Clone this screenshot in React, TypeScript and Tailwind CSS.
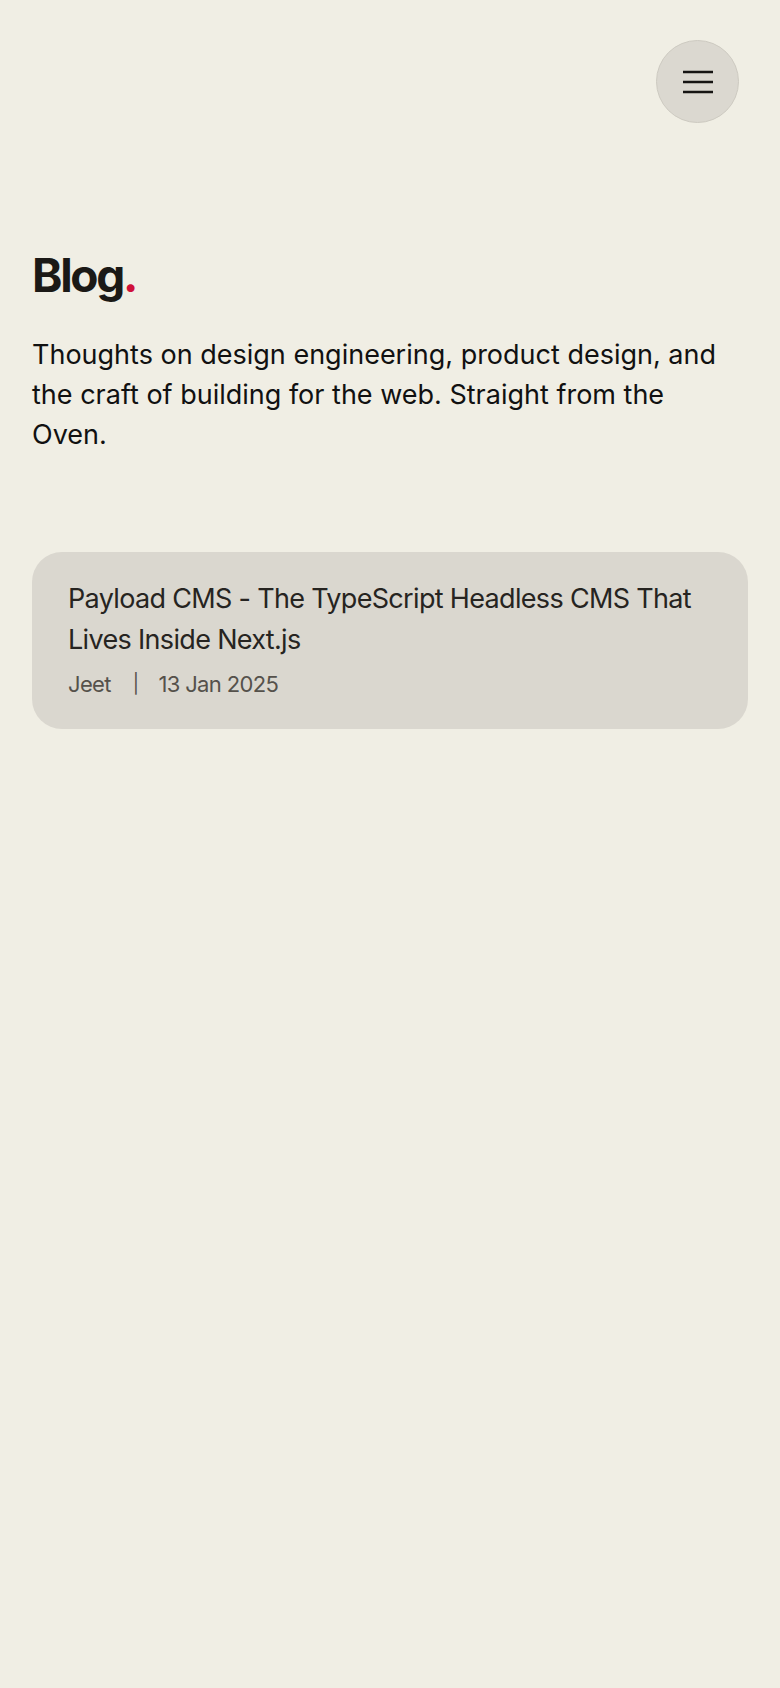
import React from "react";

interface Post {
  title: string;
  author: string;
  date: string;
}

const posts: Post[] = [
  {
    title: "Payload CMS - The TypeScript Headless CMS That Lives Inside Next.js",
    author: "Jeet",
    date: "13 Jan 2025",
  },
];

function MenuButton() {
  return (
    <button className="flex h-[83px] w-[83px] items-center justify-center rounded-full border border-[#cdcac1] bg-[#dbd8d0]">
      <svg width="32" height="24" viewBox="0 0 32 24" fill="none">
        <path d="M1 2h30M1 12h30M1 22h30" stroke="#161513" strokeWidth="2.6" />
      </svg>
    </button>
  );
}

function PostCard({ post }: { post: Post }) {
  return (
    <a href="#" className="block rounded-[30px] bg-[#dad7cf] px-9 pt-[26px] pb-[30px]">
      <h2 className="text-[27px] leading-[41px] tracking-[-0.025em] text-[#262421]">{post.title}</h2>
      <p className="mt-[9px] flex items-center text-[22px] leading-[30px] tracking-[-0.03em] text-[#55514b]">
        <span>{post.author}</span>
        <span className="ml-[22px] mr-[20px] text-[19px]">|</span>
        <span>{post.date}</span>
      </p>
    </a>
  );
}

export default function App() {
  return (
    <div
      className="min-h-[1688px] bg-[#f0eee4] px-8"
      style={{ fontFamily: "Inter, 'Noto Sans', sans-serif" }}
    >
      <header className="flex justify-end pt-10 pr-[9px]">
        <MenuButton />
      </header>

      <section className="mt-[129px]">
        <h1 className="text-[46px] font-bold leading-none tracking-[-0.05em] text-[#1b1916]">
          Blog<span className="text-[#d0103a]">.</span>
        </h1>
        <p className="mt-[37px] max-w-[700px] text-[27px] leading-[40px] text-[#111]">
          Thoughts on design engineering, product design, and the craft of building for the web. Straight from the Oven.
        </p>
      </section>

      <section className="mt-[97px]">
        {posts.map((post) => (
          <PostCard key={post.title} post={post} />
        ))}
      </section>
    </div>
  );
}
